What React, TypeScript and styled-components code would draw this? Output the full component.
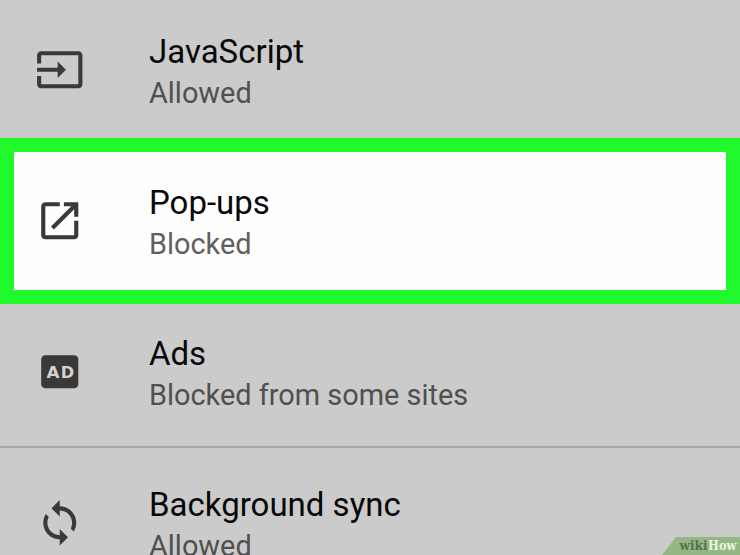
import React from "react";
import styled, { createGlobalStyle } from "styled-components";

const GlobalStyle = createGlobalStyle`
  *, *::before, *::after { box-sizing: border-box; }
  body { margin: 0; overflow: hidden; background: #cbcbcb; }
`;

const Screen = styled.main`
  position: relative;
  display: flex;
  flex-direction: column;
  width: 740px;
  height: 555px;
  overflow: hidden;
  background: #cbcbcb;
  font-family: Roboto, "Liberation Sans", sans-serif;
`;

const Row = styled.section<{ $height: number; $top: number; $highlighted?: boolean; $divided?: boolean }>`
  display: flex;
  flex: none;
  align-items: flex-start;
  height: ${(p) => p.$height}px;
  padding-top: ${(p) => p.$top}px;
  padding-left: ${(p) => (p.$highlighted ? 20.7 : 34.7)}px;
  background: ${(p) => (p.$highlighted ? "#fefefe" : "transparent")};
  border: ${(p) => (p.$highlighted ? "14px solid #20f92c" : "0")};
  ${(p) => p.$divided && "border-bottom: 2px solid #a9a9a9;"}
`;

const Icon = styled.svg`
  flex: none;
  width: 49.5px;
  height: 49.5px;
  margin-top: 12.6px;
  margin-right: 64.8px;
  fill: #393939;
`;

const BadgeText = styled.text`
  font: bold 8.1px "DejaVu Sans", sans-serif;
  fill: #d2d2d2;
`;

const Copy = styled.div`
  white-space: nowrap;
`;

const Title = styled.h2`
  margin: 0;
  font-size: 33px;
  font-weight: 400;
  line-height: 40px;
  color: #080808;
`;

const Status = styled.p<{ $light?: boolean }>`
  margin: 0;
  padding-top: 1px;
  font-size: 28.9px;
  line-height: 40px;
  color: ${(p) => (p.$light ? "#606060" : "#505050")};
`;

const Watermark = styled.svg`
  position: absolute;
  right: 0;
  bottom: 0;
  width: 79px;
  height: 19px;
`;

const Brand = styled.text`
  font: bold 12.5px "DejaVu Serif", serif;
`;

const InputIcon = () => (
  <Icon viewBox="0 0 24 24">
    <path d="M21 3.01H3c-1.1 0-2 .9-2 2V9h2V4.99h18v14.03H3V15H1v4.01c0 1.1.9 1.98 2 1.98h18c1.1 0 2-.88 2-1.98v-14c0-1.11-.9-2-2-2zM11 16l4-4-4-4v3H1v2h10v3z" />
  </Icon>
);

const OpenIcon = () => (
  <Icon viewBox="0 0 24 24">
    <path d="M19 19H5V5h7V3H5c-1.11 0-2 .9-2 2v14c0 1.1.89 2 2 2h14c1.1 0 2-.9 2-2v-7h-2v7zM14 3v2h3.59l-9.83 9.83 1.41 1.41L19 6.41V10h2V3h-7z" />
  </Icon>
);

const AdIcon = () => (
  <Icon viewBox="0 0 24 24">
    <rect x="3" y="4" width="18" height="16" rx="2" />
    <BadgeText x="5.6" y="14.9" textLength="6.3" lengthAdjust="spacingAndGlyphs">A</BadgeText>
    <BadgeText x="12.5" y="14.9" textLength="6.5" lengthAdjust="spacingAndGlyphs">D</BadgeText>
  </Icon>
);

const SyncIcon = () => (
  <Icon viewBox="0 0 24 24">
    <path d="M12 4V1L8 5l4 4V6c3.31 0 6 2.69 6 6 0 1.01-.25 1.97-.7 2.8l1.46 1.46C19.54 15.03 20 13.57 20 12c0-4.42-3.58-8-8-8zm0 14c-3.31 0-6-2.69-6-6 0-1.01.25-1.97.7-2.8L5.24 7.74C4.46 8.97 4 10.43 4 12c0 4.42 3.58 8 8 8v3l4-4-4-4v3z" />
  </Icon>
);

export default function App() {
  return (
    <>
      <GlobalStyle />
      <Screen>
        <Row $height={138} $top={32}>
          <InputIcon />
          <Copy>
            <Title>JavaScript</Title>
            <Status>Allowed</Status>
          </Copy>
        </Row>
        <Row $height={166} $top={31} $highlighted>
          <OpenIcon />
          <Copy>
            <Title>Pop-ups</Title>
            <Status $light>Blocked</Status>
          </Copy>
        </Row>
        <Row $height={144} $top={30} $divided>
          <AdIcon />
          <Copy>
            <Title>Ads</Title>
            <Status>Blocked from some sites</Status>
          </Copy>
        </Row>
        <Row $height={107} $top={37}>
          <SyncIcon />
          <Copy>
            <Title>Background sync</Title>
            <Status>Allowed</Status>
          </Copy>
        </Row>
        <Watermark viewBox="0 0 79 19">
          <path d="M15 1H79V19H1Z" fill="#93b883" />
          <Brand x="18.5" y="14.4" fill="#56704d" textLength="28" lengthAdjust="spacingAndGlyphs">wiki</Brand>
          <Brand x="47" y="14.4" fill="#edf4e9" textLength="28.5" lengthAdjust="spacingAndGlyphs">How</Brand>
        </Watermark>
      </Screen>
    </>
  );
}
